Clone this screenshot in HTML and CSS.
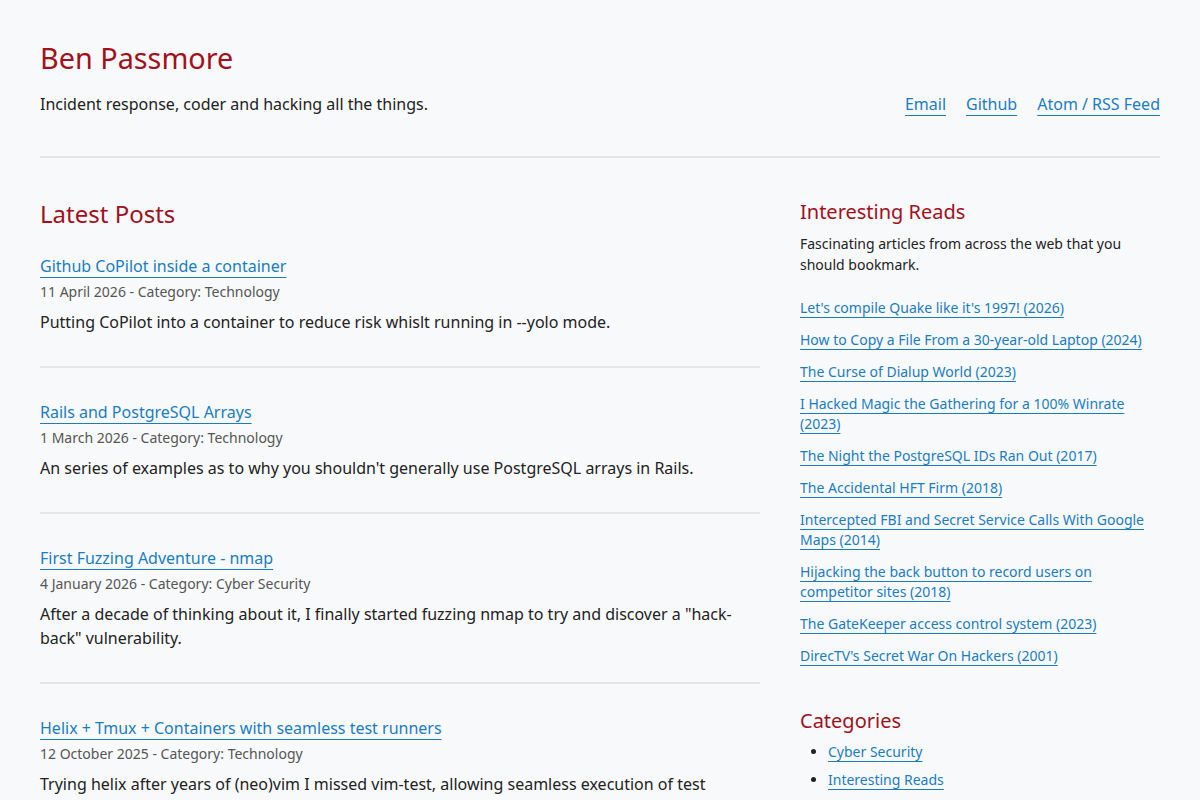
FILE: index.html
```html
<!DOCTYPE html>
<html lang="en">
<head>
    <meta charset="UTF-8">
    <meta name="viewport" content="width=device-width, initial-scale=1.0">
    <title>Ben Passmore</title>
    <link rel="stylesheet" href="styles.css">
</head>
<body>
    <div class="container">
        <header class="site-header">
            <h1 class="site-title">Ben Passmore</h1>
            <div class="header-row">
                <p class="tagline">Incident response, coder and hacking all the things.</p>
                <nav class="header-links">
                    <a href="#">Email</a>
                    <a href="#">Github</a>
                    <a href="#">Atom / RSS Feed</a>
                </nav>
            </div>
        </header>

        <div class="layout">
            <main class="posts">
                <h2 class="section-title">Latest Posts</h2>

                <article class="post">
                    <a class="post-title" href="#">Github CoPilot inside a container</a>
                    <div class="post-meta">11 April 2026 - Category: Technology</div>
                    <p class="post-excerpt">Putting CoPilot into a container to reduce risk whislt running in --yolo mode.</p>
                </article>

                <article class="post">
                    <a class="post-title" href="#">Rails and PostgreSQL Arrays</a>
                    <div class="post-meta">1 March 2026 - Category: Technology</div>
                    <p class="post-excerpt">An series of examples as to why you shouldn't generally use PostgreSQL arrays in Rails.</p>
                </article>

                <article class="post">
                    <a class="post-title" href="#">First Fuzzing Adventure - nmap</a>
                    <div class="post-meta">4 January 2026 - Category: Cyber Security</div>
                    <p class="post-excerpt">After a decade of thinking about it, I finally started fuzzing nmap to try and discover a "hack-back" vulnerability.</p>
                </article>

                <article class="post">
                    <a class="post-title" href="#">Helix + Tmux + Containers with seamless test runners</a>
                    <div class="post-meta">12 October 2025 - Category: Technology</div>
                    <p class="post-excerpt">Trying helix after years of (neo)vim I missed vim-test, allowing seamless execution of test runners inside containers without leaving the editor.</p>
                </article>
            </main>

            <aside class="sidebar">
                <h3 class="side-title">Interesting Reads</h3>
                <p class="side-intro">Fascinating articles from across the web that you should bookmark.</p>
                <ul class="reads">
                    <li><a href="#">Let's compile Quake like it's 1997! (2026)</a></li>
                    <li><a href="#">How to Copy a File From a 30-year-old Laptop (2024)</a></li>
                    <li><a href="#">The Curse of Dialup World (2023)</a></li>
                    <li><a href="#">I Hacked Magic the Gathering for a 100% Winrate (2023)</a></li>
                    <li><a href="#">The Night the PostgreSQL IDs Ran Out (2017)</a></li>
                    <li><a href="#">The Accidental HFT Firm (2018)</a></li>
                    <li><a href="#">Intercepted FBI and Secret Service Calls With Google Maps (2014)</a></li>
                    <li><a href="#">Hijacking the back button to record users on competitor sites (2018)</a></li>
                    <li><a href="#">The GateKeeper access control system (2023)</a></li>
                    <li><a href="#">DirecTV's Secret War On Hackers (2001)</a></li>
                </ul>

                <h3 class="side-title categories-title">Categories</h3>
                <ul class="categories">
                    <li><a href="#">Cyber Security</a></li>
                    <li><a href="#">Interesting Reads</a></li>
                    <li><a href="#">Technology</a></li>
                </ul>
            </aside>
        </div>
    </div>
</body>
</html>
```

FILE: styles.css
```css
body {
    background: #f8f9fb;
    color: #222;
    font-family: "Noto Sans", "Open Sans", sans-serif;
    margin: 0;
    padding: 0;
}
a {
    color: #1a7dc4;
    text-decoration: underline;
    text-decoration-thickness: 1px;
    text-underline-offset: 5px;
}
.container {
    max-width: 1120px;
    margin: 0 auto;
    padding: 0 40px;
}
.site-header {
    padding-top: 38px;
    padding-bottom: 40px;
    border-bottom: 2px solid #e3e5e8;
}
.site-title {
    color: #a3101c;
    font-size: 28.8px;
    font-weight: 400;
    line-height: 40px;
    margin: 0 0 14px;
}
.header-row {
    display: flex;
    justify-content: space-between;
    align-items: center;
}
.tagline {
    margin: 0;
    font-size: 16px;
    line-height: 24px;
}
.header-links {
    display: flex;
    gap: 20px;
    font-size: 16px;
    line-height: 24px;
}
.layout {
    display: grid;
    grid-template-columns: 720px 360px;
    gap: 40px;
    padding-top: 40px;
}
.section-title {
    color: #a3101c;
    font-size: 24px;
    font-weight: 400;
    line-height: 32px;
    margin: 0 0 24px;
}
.post {
    padding-bottom: 32px;
    margin-bottom: 32px;
    border-bottom: 2px solid #e3e5e8;
}
.post-title {
    display: inline-block;
    font-size: 16px;
    line-height: 24px;
}
.post-meta {
    color: #555;
    font-size: 14px;
    line-height: 20px;
    margin-top: 4px;
}
.post-excerpt {
    font-size: 16px;
    line-height: 24px;
    margin: 8px 0 0;
}
.side-title {
    color: #a3101c;
    font-size: 20px;
    font-weight: 400;
    line-height: 28px;
    margin: 0 0 7px;
}
.side-intro {
    font-size: 14px;
    line-height: 21px;
    margin: 0 0 23px;
}
.reads {
    list-style: none;
    margin: 0;
    padding: 0;
    font-size: 14px;
    line-height: 20px;
}
.reads li {
    margin-bottom: 12px;
}
.reads a {
    text-underline-offset: 4px;
}
.categories-title {
    margin-top: 41px;
    margin-bottom: 7px;
}
.categories {
    margin: 0;
    padding-left: 28px;
    font-size: 14px;
    line-height: 20px;
}
.categories li {
    margin-bottom: 8px;
}
.categories a {
    text-underline-offset: 4px;
}
```
